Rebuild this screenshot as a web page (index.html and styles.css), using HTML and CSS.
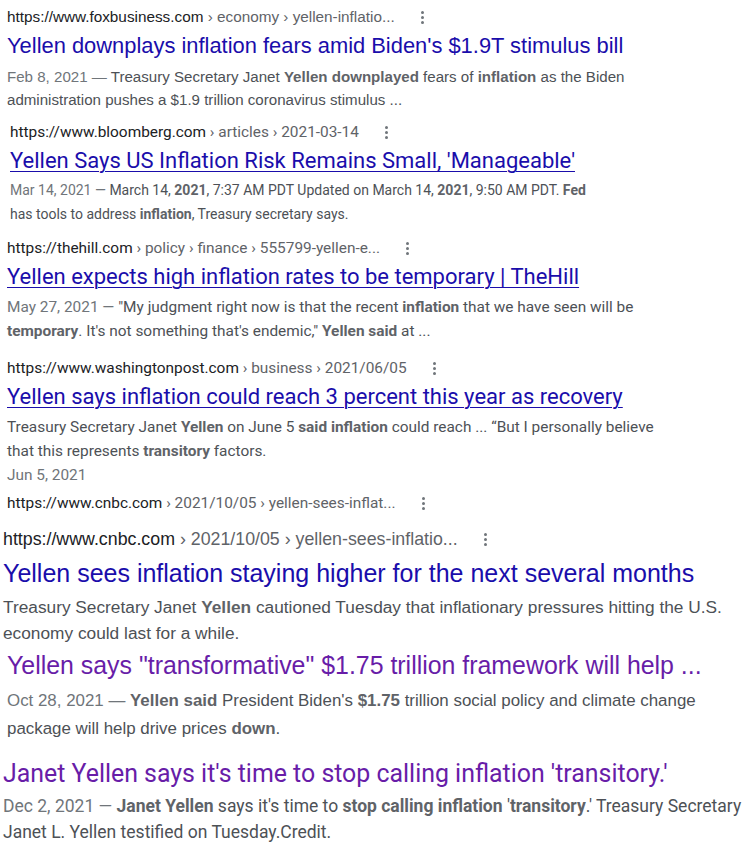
FILE: index.html
```html
<!DOCTYPE html>
<html>
<head>
<meta charset="utf-8">
<link rel="stylesheet" href="styles.css">
</head>
<body>
<div class="page">

  <div class="res fox">
    <div class="url">https://www.foxbusiness.com<span class="crumb"> › economy › yellen-inflatio...</span><span class="dots"><i></i><i></i><i></i></span></div>
    <a class="title">Yellen downplays inflation fears amid Biden's $1.9T stimulus bill</a>
    <div class="snip"><span class="date">Feb 8, 2021 —</span> Treasury Secretary Janet <b>Yellen downplayed</b> fears of <b>inflation</b> as the Biden administration pushes a $1.9 trillion coronavirus stimulus ...</div>
  </div>

  <div class="res bloom">
    <div class="url">https://www.bloomberg.com<span class="crumb"> › articles › 2021-03-14</span><span class="dots"><i></i><i></i><i></i></span></div>
    <a class="title u">Yellen Says US Inflation Risk Remains Small, 'Manageable'</a>
    <div class="snip"><span class="date">Mar 14, 2021 —</span> March 14, <b>2021</b>, 7:37 AM PDT Updated on March 14, <b>2021</b>, 9:50 AM PDT. <b>Fed</b> has tools to address <b>inflation</b>, Treasury secretary says.</div>
  </div>

  <div class="res hill">
    <div class="url">https://thehill.com<span class="crumb"> › policy › finance › 555799-yellen-e...</span><span class="dots"><i></i><i></i><i></i></span></div>
    <a class="title u">Yellen expects high inflation rates to be temporary | TheHill</a>
    <div class="snip"><span class="date">May 27, 2021 —</span> "My judgment right now is that the recent <b>inflation</b> that we have seen will be <b>temporary</b>. It's not something that's endemic," <b>Yellen said</b> at ...</div>
  </div>

  <div class="res wapo">
    <div class="url">https://www.washingtonpost.com<span class="crumb"> › business › 2021/06/05</span><span class="dots"><i></i><i></i><i></i></span></div>
    <a class="title u">Yellen says inflation could reach 3 percent this year as recovery</a>
    <div class="snip">Treasury Secretary Janet <b>Yellen</b> on June 5 <b>said inflation</b> could reach ... “But I personally believe that this represents <b>transitory</b> factors.</div>
    <div class="snip date">Jun 5, 2021</div>
    <div class="url">https://www.cnbc.com<span class="crumb"> › 2021/10/05 › yellen-sees-inflat...</span><span class="dots"><i></i><i></i><i></i></span></div>
  </div>

  <div class="res cnbc">
    <div class="url">https://www.cnbc.com<span class="crumb"> › 2021/10/05 › yellen-sees-inflatio...</span><span class="dots"><i></i><i></i><i></i></span></div>
    <a class="title">Yellen sees inflation staying higher for the next several months</a>
    <div class="snip">Treasury Secretary Janet <b>Yellen</b> cautioned Tuesday that inflationary pressures hitting the U.S. economy could last for a while.</div>
  </div>

  <div class="res frame">
    <a class="title v">Yellen says "transformative" $1.75 trillion framework will help ...</a>
    <div class="snip"><span class="date">Oct 28, 2021 —</span> <b>Yellen said</b> President Biden's <b>$1.75</b> trillion social policy and climate change package will help drive prices <b>down</b>.</div>
  </div>

  <div class="res janet">
    <a class="title v">Janet Yellen says it's time to stop calling inflation 'transitory.'</a>
    <div class="snip"><span class="date">Dec 2, 2021 —</span> <b>Janet Yellen</b> says it's time to <b>stop calling inflation</b> '<b>transitory</b>.' Treasury Secretary Janet L. Yellen testified on Tuesday.Credit.</div>
  </div>

</div>
</body>
</html>
```

FILE: styles.css
```css
* { box-sizing: border-box; }
html, body { margin: 0; padding: 0; background: #fff; }
.page { width: 750px; height: 849px; overflow: hidden; }

.res { display: flex; flex-direction: column; align-items: flex-start; }
.url { color: #202124; white-space: nowrap; display: flex; align-items: center; }
.crumb { color: #5f6368; white-space: pre; }
.title { display: block; color: #1a0dab; white-space: nowrap; }
.title.u { text-decoration: underline; text-underline-offset: 3px; text-decoration-thickness: 1px; }
.title.v { color: #681da8; }
.snip { color: #4d5156; }
.snip b { color: #5f6368; font-weight: 700; }
.date { color: #70757a; }

.dots { display: inline-flex; flex-direction: column; gap: 2px; margin-left: 26px; }
.dots i { display: block; width: 3px; height: 3px; border-radius: 50%; background: #70757a; }

/* block 1: Arial */
.fox { font-family: "Liberation Sans", Arial, sans-serif; padding: 5px 0 0 7px; }
.fox .url { font-size: 15.3px; line-height: 24px; }
.fox .title { font-size: 21.9px; line-height: 30px; margin-top: 2px; }
.fox .snip { font-size: 15.1px; line-height: 23px; margin-top: 4px; width: 640px; }

/* Roboto blocks */
.bloom, .hill, .wapo { font-family: Roboto, "Noto Sans", sans-serif; }
.bloom .url, .hill .url, .wapo .url { font-size: 15.4px; line-height: 24px; }
.bloom .title, .hill .title, .wapo .title { font-size: 22px; line-height: 30px; margin-top: 2px; }
.bloom .snip, .hill .snip, .wapo .snip { font-size: 15.4px; line-height: 24px; }

.bloom { padding: 9px 0 0 10px; }
.bloom .snip { font-size: 14px; margin-top: 2px; width: 590px; }
.hill { padding: 10px 0 0 7px; }
.hill .snip { margin-top: 3px; width: 650px; }
.wapo { padding: 13px 0 0 7px; }
.wapo .snip { margin-top: 3px; width: 665px; }
.wapo .snip.date { margin-top: 0; color: #70757a; }
.wapo .snip.date + .url { margin-top: 4px; }

/* cnbc large: Arial */
.cnbc { font-family: "Liberation Sans", Arial, sans-serif; padding: 11px 0 0 3px; }
.cnbc .url { font-size: 17.8px; line-height: 26px; }
.cnbc .title { font-size: 25px; line-height: 34px; margin-top: 4px; }
.cnbc .snip { font-size: 17.3px; line-height: 26px; margin-top: 4px; width: 740px; }

/* block 6: Arial */
.frame { font-family: "Liberation Sans", Arial, sans-serif; padding: 3px 0 0 7px; }
.frame .title { font-size: 24.9px; line-height: 32px; }
.frame .snip { font-size: 16.9px; line-height: 28px; margin-top: 6px; width: 735px; }

/* block 7: Roboto */
.janet { font-family: Roboto, "Noto Sans", sans-serif; padding: 14px 0 0 3px; }
.janet .title { font-size: 24.9px; line-height: 34px; }
.janet .snip { font-size: 17.5px; line-height: 26px; margin-top: 2px; width: 747px; }
```
